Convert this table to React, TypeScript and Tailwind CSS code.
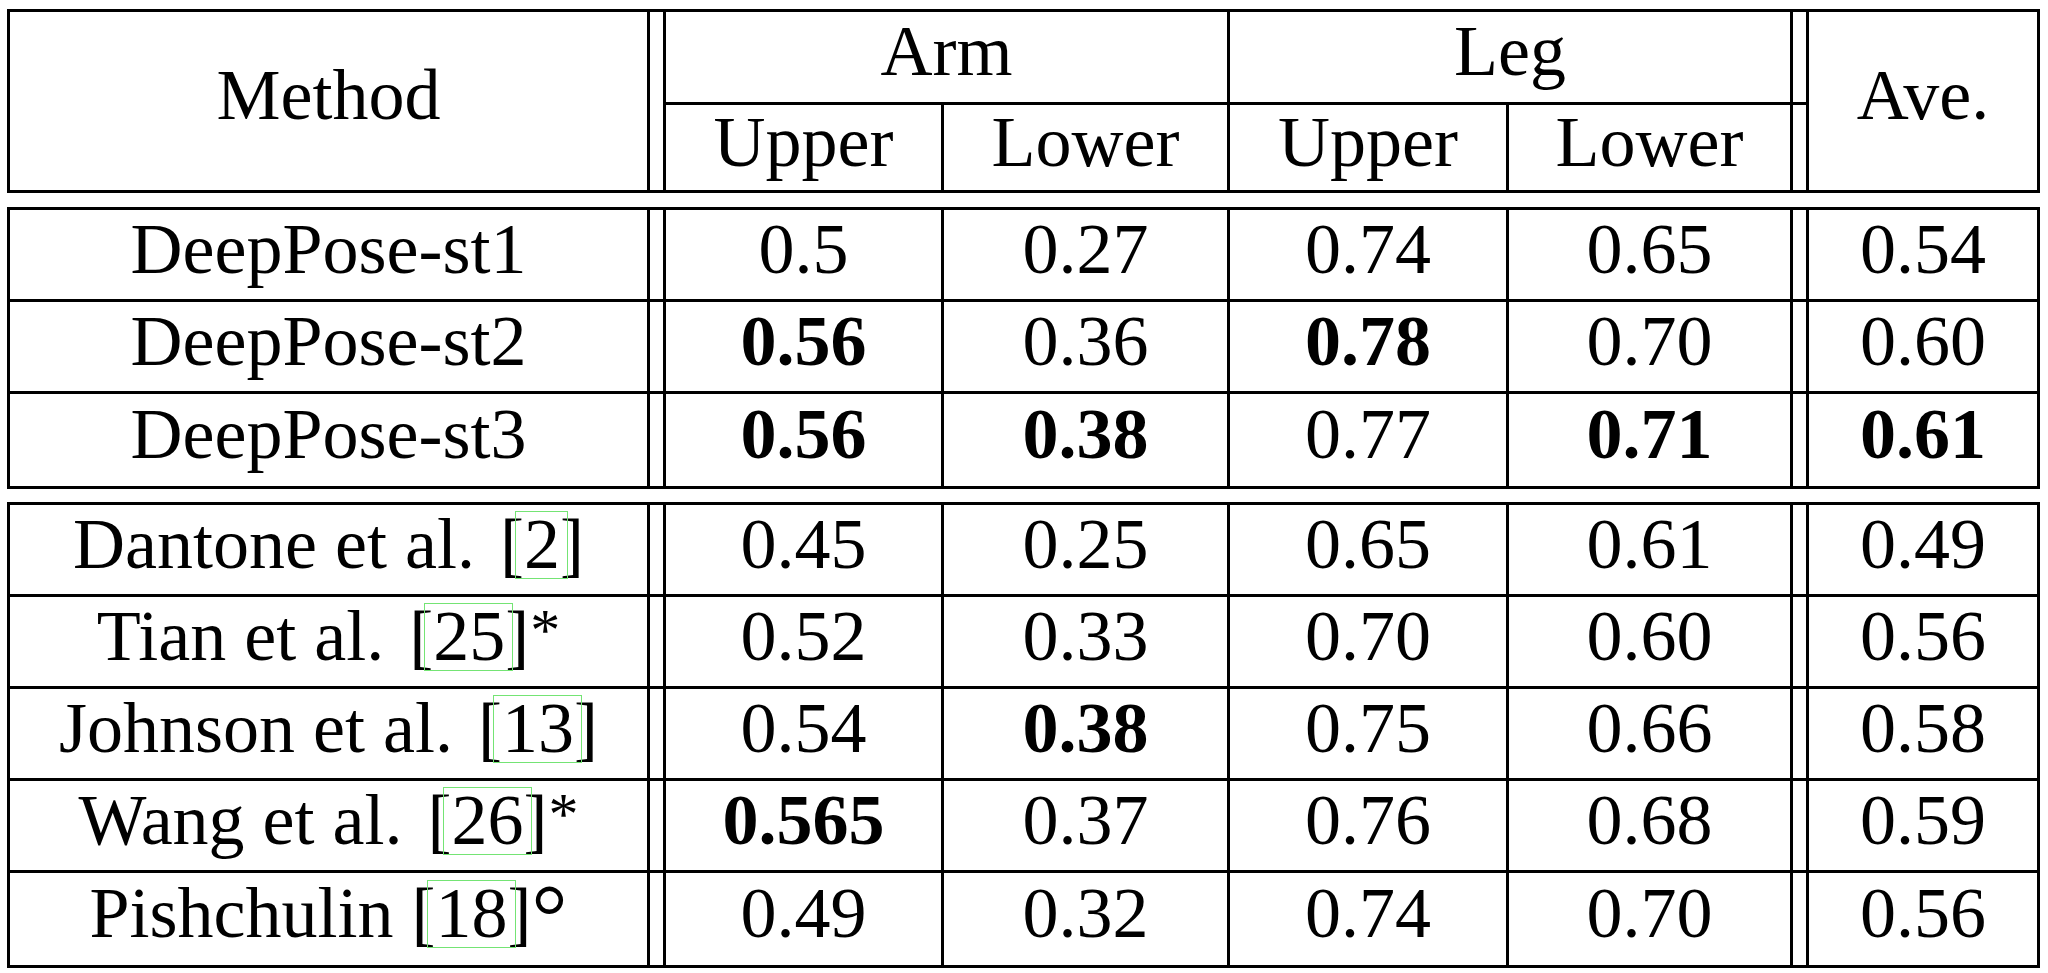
import { ReactNode } from "react"

type Row = { method: ReactNode; vals: string[]; bold?: number[] }

function Cite({ n, gap }: { n: string; gap?: boolean }) {
  return (
    <span className={gap ? "ml-[7px]" : ""}>
      [
      <span className="relative">
        {n}
        <span className="absolute left-[-9px] right-[-8px] top-[7px] bottom-[5px] border border-[#74e474]" />
      </span>
      ]
    </span>
  )
}

const Star = () => <span className="text-[60px] leading-[0] align-[10px] ml-[1px]">*</span>

const ours: Row[] = [
  { method: "DeepPose-st1", vals: ["0.5", "0.27", "0.74", "0.65", "0.54"] },
  { method: "DeepPose-st2", vals: ["0.56", "0.36", "0.78", "0.70", "0.60"], bold: [0, 2] },
  { method: "DeepPose-st3", vals: ["0.56", "0.38", "0.77", "0.71", "0.61"], bold: [0, 1, 3, 4] },
]

const others: Row[] = [
  {
    method: <>Dantone et al. <Cite n="2" gap /></>,
    vals: ["0.45", "0.25", "0.65", "0.61", "0.49"],
  },
  {
    method: <>Tian et al. <Cite n="25" gap /><Star /></>,
    vals: ["0.52", "0.33", "0.70", "0.60", "0.56"],
  },
  {
    method: <>Johnson et al. <Cite n="13" gap /></>,
    vals: ["0.54", "0.38", "0.75", "0.66", "0.58"],
    bold: [1],
  },
  {
    method: <>Wang et al. <Cite n="26" gap /><Star /></>,
    vals: ["0.565", "0.37", "0.76", "0.68", "0.59"],
    bold: [0],
  },
  {
    method: <>Pishchulin <Cite n="18" /><span className="text-[90px] leading-[0] align-[-10px]">°</span></>,
    vals: ["0.49", "0.32", "0.74", "0.70", "0.56"],
  },
]

// widths of the value columns, left border included
const cols = [
  "w-[278px] border-l-[3px]",
  "w-[286px] border-l-[3px]",
  "w-[279px] border-l-[3px]",
  "w-[287px] border-l-[3px] border-r-[3px]",
]

const cell = "flex items-center justify-center pb-[12px] border-black whitespace-nowrap"

function Group({ rows }: { rows: Row[] }) {
  return (
    <div className="border-[3px] border-black">
      {rows.map((r, i) => (
        <div
          key={i}
          className={`flex h-[92px] border-black ${i < rows.length - 1 ? "border-b-[3px]" : "h-[89px]"}`}
        >
          <div className={`${cell} w-[640px] border-r-[3px]`}>
            <span>{r.method}</span>
          </div>
          <div className="w-[13px]" />
          {r.vals.slice(0, 4).map((v, j) => (
            <div key={j} className={`${cell} ${cols[j]} ${r.bold?.includes(j) ? "font-bold" : ""}`}>
              {v}
            </div>
          ))}
          <div className="w-[13px]" />
          <div className={`${cell} w-[231px] border-l-[3px] ${r.bold?.includes(4) ? "font-bold" : ""}`}>
            {r.vals[4]}
          </div>
        </div>
      ))}
    </div>
  )
}

export default function App() {
  return (
    <div className="min-h-screen bg-white pt-[9px] pl-[7px] text-black font-['Liberation_Serif',serif] text-[72px] leading-none">
      <div className="w-[2033px]">

        <div className="flex h-[184px] border-[3px] border-black">
          <div className={`${cell} w-[640px] border-r-[3px]`}>Method</div>
          <div className="w-[13px]" />
          <div className="flex flex-col w-[1130px]">
            <div className="flex h-[93px] border-b-[3px] border-black">
              <div className={`${cell} w-[564px] border-l-[3px]`}>Arm</div>
              <div className={`${cell} w-[566px] border-l-[3px] border-r-[3px]`}>Leg</div>
            </div>
            <div className="flex flex-1">
              {["Upper", "Lower", "Upper", "Lower"].map((t, j) => (
                <div key={j} className={`${cell} ${cols[j]}`}>{t}</div>
              ))}
            </div>
          </div>
          <div className="w-[13px] flex flex-col">
            <div className="h-[93px] border-b-[3px] border-black" />
          </div>
          <div className={`${cell} w-[231px] border-l-[3px]`}>Ave.</div>
        </div>

        <div className="mt-[14px]">
          <Group rows={ours} />
        </div>

        <div className="mt-[13px]">
          <Group rows={others} />
        </div>

      </div>
    </div>
  )
}
